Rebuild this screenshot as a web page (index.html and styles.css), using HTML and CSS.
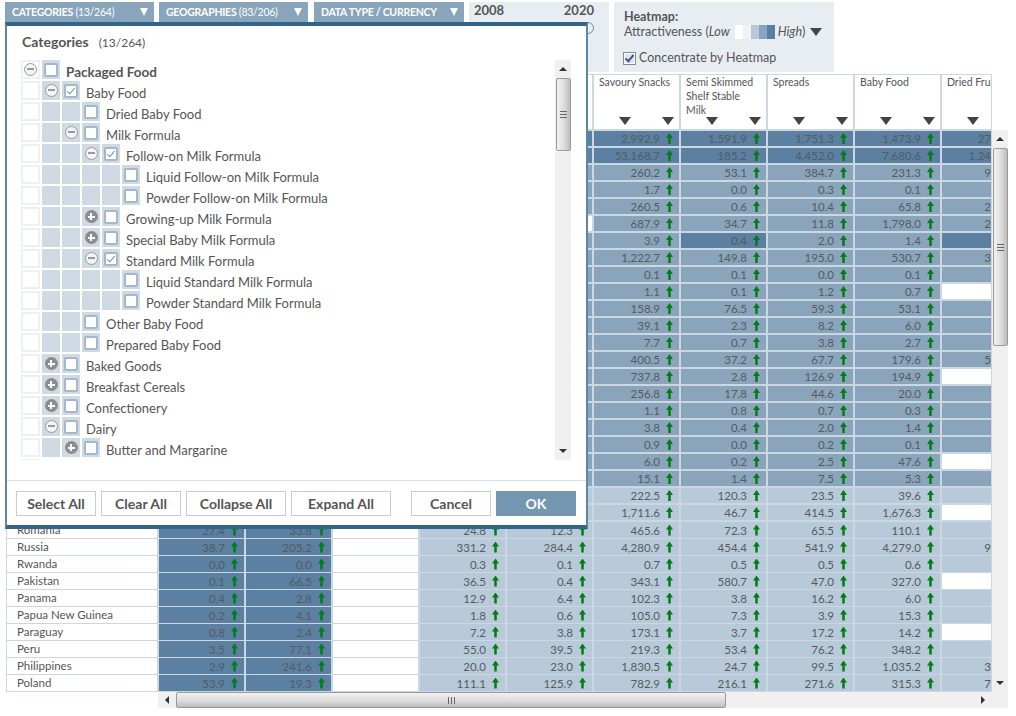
FILE: index.html
```html
<!DOCTYPE html>
<html lang="en">
<head>
  <meta charset="UTF-8">
  <title>Categories</title>
  <link rel="stylesheet" href="styles.css">
</head>
<body>
  <!-- Filter bar -->
  <div class="topbar">
    <div class="filter"><span><b>CATEGORIES</b> (13/264)</span><i class="drop"></i></div>
    <div class="filter"><span><b>GEOGRAPHIES</b> (83/206)</span><i class="drop"></i></div>
    <div class="filter"><span><b>DATA TYPE / CURRENCY</b></span><i class="drop"></i></div>
    <div class="years">
      <div class="year-labels"><span>2008</span><span>2020</span></div>
      <div class="year-slider"><i class="handle"></i></div>
    </div>
    <div class="heatmap">
      <div class="heat-title">Heatmap:</div>
      <div class="heat-line">Attractiveness (<em>Low</em>
        <span class="scale"><i class="s1"></i><i class="s2"></i><i class="s3"></i><i class="s4"></i><i class="s5"></i></span>
        <em>High</em>)<i class="tri"></i>
      </div>
      <div class="heat-check"><i class="native-check"></i>Concentrate by Heatmap</div>
    </div>
  </div>

  <!-- Data table -->
  <div class="data">
    <div class="grid-wrap">
      <div class="row head">
        <div class="skip"></div>
        <div class="hd"></div>
        <div class="hd">Savoury Snacks<div class="arrows"><i class="tri"></i><i class="tri"></i></div></div>
        <div class="hd">Semi Skimmed Shelf Stable Milk<div class="arrows"><i class="tri"></i><i class="tri"></i></div></div>
        <div class="hd">Spreads<div class="arrows"><i class="tri"></i><i class="tri"></i></div></div>
        <div class="hd">Baby Food<div class="arrows"><i class="tri"></i><i class="tri"></i></div></div>
        <div class="hd cut-hd">Dried Frui<div class="arrows"><i class="tri"></i></div></div>
      </div>

      <div class="row dark"><div class="skip"></div><div class="c"></div><div class="c">2,992.9</div><div class="c">1,591.9</div><div class="c">1,751.3</div><div class="c">1,473.9</div><div class="c cut">27</div></div>
      <div class="row dark"><div class="skip"></div><div class="c"></div><div class="c">53,168.7</div><div class="c">185.2</div><div class="c">4,452.0</div><div class="c">7,680.6</div><div class="c cut">1,24</div></div>
      <div class="row mid"><div class="skip"></div><div class="c"></div><div class="c">260.2</div><div class="c">53.1</div><div class="c">384.7</div><div class="c">231.3</div><div class="c cut">9</div></div>
      <div class="row mid"><div class="skip"></div><div class="c"></div><div class="c">1.7</div><div class="c">0.0</div><div class="c">0.3</div><div class="c">0.1</div><div class="c cut"></div></div>
      <div class="row mid"><div class="skip"></div><div class="c"></div><div class="c">260.5</div><div class="c">0.6</div><div class="c">10.4</div><div class="c">65.8</div><div class="c cut">2</div></div>
      <div class="row mid"><div class="skip"></div><div class="c w"></div><div class="c">687.9</div><div class="c">34.7</div><div class="c">11.8</div><div class="c">1,798.0</div><div class="c cut">2</div></div>
      <div class="row mid"><div class="skip"></div><div class="c"></div><div class="c">3.9</div><div class="c d">0.4</div><div class="c">2.0</div><div class="c">1.4</div><div class="c cut d"></div></div>
      <div class="row mid"><div class="skip"></div><div class="c"></div><div class="c">1,222.7</div><div class="c">149.8</div><div class="c">195.0</div><div class="c">530.7</div><div class="c cut">3</div></div>
      <div class="row mid"><div class="skip"></div><div class="c"></div><div class="c">0.1</div><div class="c">0.1</div><div class="c">0.0</div><div class="c">0.1</div><div class="c cut"></div></div>
      <div class="row mid"><div class="skip"></div><div class="c"></div><div class="c">1.1</div><div class="c">0.1</div><div class="c">1.2</div><div class="c">0.7</div><div class="c cut w"></div></div>
      <div class="row mid"><div class="skip"></div><div class="c"></div><div class="c">158.9</div><div class="c">76.5</div><div class="c">59.3</div><div class="c">53.1</div><div class="c cut"></div></div>
      <div class="row mid"><div class="skip"></div><div class="c"></div><div class="c">39.1</div><div class="c">2.3</div><div class="c">8.2</div><div class="c">6.0</div><div class="c cut"></div></div>
      <div class="row mid"><div class="skip"></div><div class="c"></div><div class="c">7.7</div><div class="c">0.7</div><div class="c">3.8</div><div class="c">2.7</div><div class="c cut"></div></div>
      <div class="row mid"><div class="skip"></div><div class="c"></div><div class="c">400.5</div><div class="c">37.2</div><div class="c">67.7</div><div class="c">179.6</div><div class="c cut">5</div></div>
      <div class="row mid"><div class="skip"></div><div class="c"></div><div class="c">737.8</div><div class="c">2.8</div><div class="c">126.9</div><div class="c">194.9</div><div class="c cut w"></div></div>
      <div class="row mid"><div class="skip"></div><div class="c"></div><div class="c">256.8</div><div class="c">17.8</div><div class="c">44.6</div><div class="c">20.0</div><div class="c cut"></div></div>
      <div class="row mid"><div class="skip"></div><div class="c"></div><div class="c">1.1</div><div class="c">0.8</div><div class="c">0.7</div><div class="c">0.3</div><div class="c cut"></div></div>
      <div class="row mid"><div class="skip"></div><div class="c"></div><div class="c">3.8</div><div class="c">0.4</div><div class="c">2.0</div><div class="c">1.4</div><div class="c cut"></div></div>
      <div class="row mid"><div class="skip"></div><div class="c"></div><div class="c">0.9</div><div class="c">0.0</div><div class="c">0.2</div><div class="c">0.1</div><div class="c cut"></div></div>
      <div class="row mid"><div class="skip"></div><div class="c"></div><div class="c">6.0</div><div class="c">0.2</div><div class="c">2.5</div><div class="c">47.6</div><div class="c cut w"></div></div>
      <div class="row mid"><div class="skip"></div><div class="c"></div><div class="c">15.1</div><div class="c">1.4</div><div class="c">7.5</div><div class="c">5.3</div><div class="c cut"></div></div>
      <div class="row light"><div class="skip"></div><div class="c"></div><div class="c">222.5</div><div class="c">120.3</div><div class="c">23.5</div><div class="c">39.6</div><div class="c cut"></div></div>
      <div class="row light"><div class="skip"></div><div class="c"></div><div class="c">1,711.6</div><div class="c">46.7</div><div class="c">414.5</div><div class="c">1,676.3</div><div class="c cut w"></div></div>

      <div class="row light"><div class="name">Romania</div><div class="c d">27.4</div><div class="c d">33.8</div><div class="c w"></div><div class="c">24.8</div><div class="c">12.3</div><div class="c">465.6</div><div class="c">72.3</div><div class="c">65.5</div><div class="c">110.1</div><div class="c cut"></div></div>
      <div class="row light"><div class="name">Russia</div><div class="c d">38.7</div><div class="c d">205.2</div><div class="c w"></div><div class="c">331.2</div><div class="c">284.4</div><div class="c">4,280.9</div><div class="c">454.4</div><div class="c">541.9</div><div class="c">4,279.0</div><div class="c cut">9</div></div>
      <div class="row light"><div class="name">Rwanda</div><div class="c d">0.0</div><div class="c d">0.0</div><div class="c w"></div><div class="c">0.3</div><div class="c">0.1</div><div class="c">0.7</div><div class="c">0.5</div><div class="c">0.5</div><div class="c">0.6</div><div class="c cut"></div></div>
      <div class="row light"><div class="name">Pakistan</div><div class="c d">0.1</div><div class="c d">66.5</div><div class="c w"></div><div class="c">36.5</div><div class="c">0.4</div><div class="c">343.1</div><div class="c">580.7</div><div class="c">47.0</div><div class="c">327.0</div><div class="c cut w"></div></div>
      <div class="row light"><div class="name">Panama</div><div class="c d">0.4</div><div class="c d">2.8</div><div class="c w"></div><div class="c">12.9</div><div class="c">6.4</div><div class="c">102.3</div><div class="c">3.8</div><div class="c">16.2</div><div class="c">6.0</div><div class="c cut"></div></div>
      <div class="row light"><div class="name">Papua New Guinea</div><div class="c d">0.2</div><div class="c d">4.1</div><div class="c w"></div><div class="c">1.8</div><div class="c">0.6</div><div class="c">105.0</div><div class="c">7.3</div><div class="c">3.9</div><div class="c">15.3</div><div class="c cut"></div></div>
      <div class="row light"><div class="name">Paraguay</div><div class="c d">0.8</div><div class="c d">2.4</div><div class="c w"></div><div class="c">7.2</div><div class="c">3.8</div><div class="c">173.1</div><div class="c">3.7</div><div class="c">17.2</div><div class="c">14.2</div><div class="c cut w"></div></div>
      <div class="row light"><div class="name">Peru</div><div class="c d">3.5</div><div class="c d">77.1</div><div class="c w"></div><div class="c">55.0</div><div class="c">39.5</div><div class="c">219.3</div><div class="c">53.4</div><div class="c">76.2</div><div class="c">348.2</div><div class="c cut"></div></div>
      <div class="row light"><div class="name">Philippines</div><div class="c d">2.9</div><div class="c d">241.6</div><div class="c w"></div><div class="c">20.0</div><div class="c">23.0</div><div class="c">1,830.5</div><div class="c">24.7</div><div class="c">99.5</div><div class="c">1,035.2</div><div class="c cut">3</div></div>
      <div class="row light"><div class="name">Poland</div><div class="c d">53.9</div><div class="c d">19.3</div><div class="c w"></div><div class="c">111.1</div><div class="c">125.9</div><div class="c">782.9</div><div class="c">216.1</div><div class="c">271.6</div><div class="c">315.3</div><div class="c cut">7</div></div>
    </div>

    <div class="vbar outer-v">
      <i class="btn"><i class="a-up"></i></i>
      <div class="thumb-v big"><i class="grip-v"></i></div>
      <i class="btn end"><i class="a-down"></i></i>
    </div>
  </div>

  <div class="hbar">
    <i class="btn"><i class="a-left"></i></i>
    <div class="thumb-h"><i class="grip-h"></i></div>
    <i class="btn end"><i class="a-right"></i></i>
  </div>

  <!-- Categories dialog, open over the table -->
  <div class="dialog">
    <div class="dlg-title"><b>Categories</b><span>(13/264)</span></div>
    <div class="dlg-body">
      <div class="tree">
        <div class="node top"><i class="t w"><i class="minus"></i></i><i class="t"><i class="box"></i></i><span class="lbl"><b>Packaged Food</b></span></div>
        <div class="node"><i class="t w"></i><i class="t"><i class="minus"></i></i><i class="t"><i class="box on"></i></i><span class="lbl">Baby Food</span></div>
        <div class="node"><i class="t w"></i><i class="t"></i><i class="t"></i><i class="t"><i class="box"></i></i><span class="lbl">Dried Baby Food</span></div>
        <div class="node"><i class="t w"></i><i class="t"></i><i class="t"><i class="minus"></i></i><i class="t"><i class="box"></i></i><span class="lbl">Milk Formula</span></div>
        <div class="node"><i class="t w"></i><i class="t"></i><i class="t"></i><i class="t"><i class="minus"></i></i><i class="t"><i class="box on"></i></i><span class="lbl">Follow-on Milk Formula</span></div>
        <div class="node"><i class="t w"></i><i class="t"></i><i class="t"></i><i class="t"></i><i class="t"></i><i class="t"><i class="box"></i></i><span class="lbl">Liquid Follow-on Milk Formula</span></div>
        <div class="node"><i class="t w"></i><i class="t"></i><i class="t"></i><i class="t"></i><i class="t"></i><i class="t"><i class="box"></i></i><span class="lbl">Powder Follow-on Milk Formula</span></div>
        <div class="node"><i class="t w"></i><i class="t"></i><i class="t"></i><i class="t"><i class="plus"></i></i><i class="t"><i class="box"></i></i><span class="lbl">Growing-up Milk Formula</span></div>
        <div class="node"><i class="t w"></i><i class="t"></i><i class="t"></i><i class="t"><i class="plus"></i></i><i class="t"><i class="box"></i></i><span class="lbl">Special Baby Milk Formula</span></div>
        <div class="node"><i class="t w"></i><i class="t"></i><i class="t"></i><i class="t"><i class="minus"></i></i><i class="t"><i class="box on"></i></i><span class="lbl">Standard Milk Formula</span></div>
        <div class="node"><i class="t w"></i><i class="t"></i><i class="t"></i><i class="t"></i><i class="t"></i><i class="t"><i class="box"></i></i><span class="lbl">Liquid Standard Milk Formula</span></div>
        <div class="node"><i class="t w"></i><i class="t"></i><i class="t"></i><i class="t"></i><i class="t"></i><i class="t"><i class="box"></i></i><span class="lbl">Powder Standard Milk Formula</span></div>
        <div class="node"><i class="t w"></i><i class="t"></i><i class="t"></i><i class="t"><i class="box"></i></i><span class="lbl">Other Baby Food</span></div>
        <div class="node"><i class="t w"></i><i class="t"></i><i class="t"></i><i class="t"><i class="box"></i></i><span class="lbl">Prepared Baby Food</span></div>
        <div class="node"><i class="t w"></i><i class="t"><i class="plus"></i></i><i class="t"><i class="box"></i></i><span class="lbl">Baked Goods</span></div>
        <div class="node"><i class="t w"></i><i class="t"><i class="plus"></i></i><i class="t"><i class="box"></i></i><span class="lbl">Breakfast Cereals</span></div>
        <div class="node"><i class="t w"></i><i class="t"><i class="plus"></i></i><i class="t"><i class="box"></i></i><span class="lbl">Confectionery</span></div>
        <div class="node"><i class="t w"></i><i class="t"><i class="minus"></i></i><i class="t"><i class="box"></i></i><span class="lbl">Dairy</span></div>
        <div class="node"><i class="t w"></i><i class="t"></i><i class="t"><i class="plus"></i></i><i class="t"><i class="box"></i></i><span class="lbl">Butter and Margarine</span></div>
        <div class="node"><i class="t w"></i></div>
      </div>
      <div class="vbar inner-v">
        <i class="btn"><i class="a-up"></i></i>
        <div class="thumb-v small"><i class="grip-v"></i></div>
        <i class="btn end"><i class="a-down"></i></i>
      </div>
    </div>
    <div class="dlg-foot">
      <button class="b">Select All</button>
      <button class="b">Clear All</button>
      <button class="b wide">Collapse All</button>
      <button class="b wide">Expand All</button>
      <button class="b cancel">Cancel</button>
      <button class="b ok">OK</button>
    </div>
  </div>
</body>
</html>
```

FILE: styles.css
```css
body {
  margin: 0;
  font-family: Lato, "Liberation Sans", sans-serif;
  color: #555;
  background-color: #fff;
}
i {
  font-style: normal;
  display: block;
}

/* top filter bar */
.topbar {
  display: flex;
  align-items: flex-start;
  gap: 5px;
  padding: 2px 0 0 5px;
  height: 74px;
  box-sizing: border-box;
}
.filter {
  display: flex;
  align-items: center;
  justify-content: space-between;
  width: 149px;
  height: 20px;
  padding: 0 6px 0 7px;
  box-sizing: border-box;
  background-color: #88a5bc;
  color: #fff;
  font-size: 10.5px;
  letter-spacing: -0.25px;
  white-space: nowrap;
}
.filter + .filter + .filter {
  width: 150px;
  margin-left: 1px;
}
.drop {
  width: 0;
  height: 0;
  border-left: 4.5px solid transparent;
  border-right: 4.5px solid transparent;
  border-top: 8px solid #fff;
}
.years {
  width: 140px;
  height: 70px;
  padding: 0 15px 0 5px;
  box-sizing: border-box;
  background-color: #e8edf2;
}
.year-labels {
  display: flex;
  justify-content: space-between;
  font-size: 13px;
  font-weight: bold;
}
.year-slider {
  display: flex;
  justify-content: flex-end;
  margin-top: 4px;
}
.handle {
  width: 10px;
  height: 10px;
  border: 1px solid #888;
  border-radius: 50%;
}
.heatmap {
  width: 220px;
  height: 70px;
  padding: 7px 10px 7px 9px;
  box-sizing: border-box;
  background-color: #e8edf2;
  font-size: 12.5px;
}
.heat-title,
.heat-line {
  padding-left: 1px;
}
.heat-title {
  font-weight: bold;
  line-height: 15px;
}
.heat-line {
  display: flex;
  align-items: center;
  line-height: 16px;
  white-space: pre;
}
.heat-line .tri {
  margin-left: 5px;
}
.scale {
  display: flex;
  margin: 0 3px 0 5px;
}
.scale i {
  width: 8px;
  height: 14px;
}
.s1 { background-color: #fff; }
.s2 { background-color: #f0f3f6; }
.s3 { background-color: #b8cad9; }
.s4 { background-color: #8aa5bb; }
.s5 { background-color: #5b80a1; }
.heat-check {
  display: flex;
  align-items: center;
  gap: 3px;
  margin-top: 11px;
  line-height: 14px;
}
.native-check {
  position: relative;
  width: 11px;
  height: 11px;
  border: 1px solid #8a8a8a;
  background-color: #dfe3f2;
  box-shadow: inset 0 0 0 1px #fff;
}
.native-check::after {
  content: "";
  position: absolute;
  left: 3px;
  top: 0;
  width: 3px;
  height: 7px;
  border-right: 2px solid #3a55a8;
  border-bottom: 2px solid #3a55a8;
  transform: rotate(40deg);
}
.tri {
  width: 0;
  height: 0;
  border-left: 6px solid transparent;
  border-right: 6px solid transparent;
  border-top: 8px solid #444;
}

/* data table */
.data {
  display: flex;
  margin-left: 6px;
}
.grid-wrap {
  width: 986px;
  padding: 1px 0 0 1px;
  box-sizing: border-box;
  background-color: #cbd8e2;
  overflow: hidden;
}
.row {
  display: grid;
  grid-template-columns: 150px repeat(9, 85px) 49px;
  column-gap: 2px;
  height: 15px;
  margin-bottom: 2px;
  font-size: 11.5px;
}
.row.head {
  height: 54px;
}
.skip {
  grid-column: 1 / 6;
}
.dark { --shade: #5b80a1; }
.mid { --shade: #8aa5bb; }
.light { --shade: #b8cad9; }
.name {
  padding-left: 10px;
  background-color: #fff;
  line-height: 16px;
  color: #555;
}
.c {
  display: flex;
  align-items: center;
  justify-content: flex-end;
  gap: 6px;
  padding-right: 6px;
  background-color: var(--shade);
  color: #555b62;
  line-height: 15px;
  white-space: nowrap;
  overflow: hidden;
}
.c::after {
  content: "";
  flex: none;
  width: 7px;
  height: 11px;
  background-color: #037c17;
  clip-path: polygon(50% 0, 100% 45%, 68% 45%, 68% 100%, 32% 100%, 32% 45%, 0 45%);
}
.c:empty::after,
.cut::after {
  display: none;
}
.cut {
  padding-right: 0;
}
.c.d { background-color: #5b80a1; }
.c.w { background-color: #fff; }
.hd {
  display: flex;
  flex-direction: column;
  justify-content: space-between;
  padding: 0 5px 4px;
  box-sizing: border-box;
  background-color: #fff;
  font-size: 10.5px;
  line-height: 14px;
  overflow: hidden;
  white-space: normal;
}
.arrows {
  display: flex;
  justify-content: flex-end;
  gap: 31px;
}
.cut-hd {
  white-space: nowrap;
  padding-right: 0;
}
.cut-hd .arrows {
  justify-content: flex-start;
  padding-left: 20px;
}

/* scrollbars */
.vbar,
.hbar {
  display: flex;
  background-color: #f0f0f0;
}
.vbar {
  flex-direction: column;
  align-items: center;
  width: 16px;
}
.outer-v {
  margin-top: 56px;
}
.btn {
  display: flex;
  align-items: center;
  justify-content: center;
  flex: none;
  width: 16px;
  height: 18px;
}
.btn.end {
  margin-top: auto;
}
.a-up,
.a-down,
.a-left,
.a-right {
  width: 0;
  height: 0;
  border: 4px solid transparent;
}
.a-up {
  border-top-width: 0;
  border-bottom-color: #333;
}
.a-down {
  border-bottom-width: 0;
  border-top-color: #333;
}
.a-left {
  border-left-width: 0;
  border-right-color: #333;
}
.a-right {
  border-right-width: 0;
  border-left-color: #333;
}
.thumb-v,
.thumb-h {
  display: flex;
  align-items: center;
  justify-content: center;
  box-sizing: border-box;
  border: 1px solid #9a9a9a;
  border-radius: 2px;
}
.thumb-v {
  width: 15px;
  background: linear-gradient(to right, #f2f2f2, #dcdcdc 55%, #bdbdbd);
}
.thumb-v.big { height: 198px; }
.thumb-v.small { height: 73px; }
.grip-v {
  width: 7px;
  height: 7px;
  background: repeating-linear-gradient(to bottom, #666 0, #666 1px, transparent 1px, transparent 3px);
}
.hbar {
  width: 850px;
  height: 16px;
  margin-left: 158px;
}
.hbar .btn {
  width: 18px;
  height: 16px;
}
.hbar .btn.end {
  margin: 0 16px 0 auto;
}
.thumb-h {
  width: 550px;
  height: 16px;
  background: linear-gradient(to bottom, #f2f2f2, #dcdcdc 55%, #bdbdbd);
}
.grip-h {
  width: 7px;
  height: 7px;
  background: repeating-linear-gradient(to right, #666 0, #666 1px, transparent 1px, transparent 3px);
}

/* categories dialog */
.dialog {
  position: absolute;
  left: 5px;
  top: 22px;
  width: 583px;
  height: 507px;
  box-sizing: border-box;
  border-top: 4px solid #33658c;
  border-left: 2px solid #5c86a3;
  border-right: 2px solid #5c86a3;
  border-bottom: 4px solid #33658c;
  background-color: #fff;
}
.dlg-title {
  display: flex;
  gap: 10px;
  align-items: baseline;
  height: 34px;
  padding: 8px 0 0 15px;
  box-sizing: border-box;
  font-size: 14px;
  line-height: 16px;
}
.dlg-title span {
  font-size: 12px;
}
.dlg-body {
  display: flex;
  margin-left: 14px;
  height: 400px;
}
.tree {
  width: 534px;
  height: 400px;
  overflow: hidden;
}
.node {
  display: flex;
  gap: 2px;
  height: 19px;
  margin-bottom: 2px;
}
.t {
  display: flex;
  align-items: center;
  justify-content: center;
  width: 18px;
  height: 19px;
  background-color: #cfdae5;
}
.t.w {
  width: 19px;
  background-color: #fff;
  box-shadow: inset 0 0 0 2px #edf1f4;
}
.lbl {
  margin-left: 4px;
  padding-top: 4px;
  font-size: 13px;
  line-height: 17px;
  white-space: nowrap;
}
.lbl b {
  font-size: 13.5px;
}
.box {
  position: relative;
  width: 10px;
  height: 10px;
  border: 2px solid #a3b9cb;
  border-radius: 2px;
  background-color: #fff;
}
.box.on::after {
  content: "";
  position: absolute;
  left: 3px;
  top: 0;
  width: 3px;
  height: 7px;
  border-right: 1px solid #6f90aa;
  border-bottom: 1px solid #6f90aa;
  transform: rotate(40deg);
}
.minus,
.plus {
  position: relative;
  width: 13px;
  height: 13px;
  box-sizing: border-box;
  border-radius: 50%;
}
.minus {
  border: 1.5px solid #999;
  background-color: #f4f4f4;
}
.minus::after {
  content: "";
  position: absolute;
  left: 2px;
  right: 2px;
  top: 4px;
  height: 2px;
  background-color: #999;
}
.plus {
  background-color: #8c8c8c;
}
.plus::before,
.plus::after {
  content: "";
  position: absolute;
  background-color: #fff;
}
.plus::before {
  left: 3px;
  right: 3px;
  top: 5.5px;
  height: 2px;
}
.plus::after {
  top: 3px;
  bottom: 3px;
  left: 5.5px;
  width: 2px;
}
.dlg-foot {
  display: flex;
  gap: 5px;
  margin-top: 20px;
  padding: 10px 0 0 9px;
  border-top: 1px solid #d5e0e6;
}
.b {
  width: 80px;
  height: 25px;
  padding: 0;
  border: 1px solid #ccc;
  background-color: #fff;
  color: #555;
  font-family: Lato, "Liberation Sans", sans-serif;
  font-size: 14px;
  font-weight: bold;
}
.b.wide {
  width: 100px;
}
.b.cancel {
  margin-left: 15px;
}
.b.ok {
  border-color: #7396b1;
  background-color: #7396b1;
  color: #fff;
}
```
